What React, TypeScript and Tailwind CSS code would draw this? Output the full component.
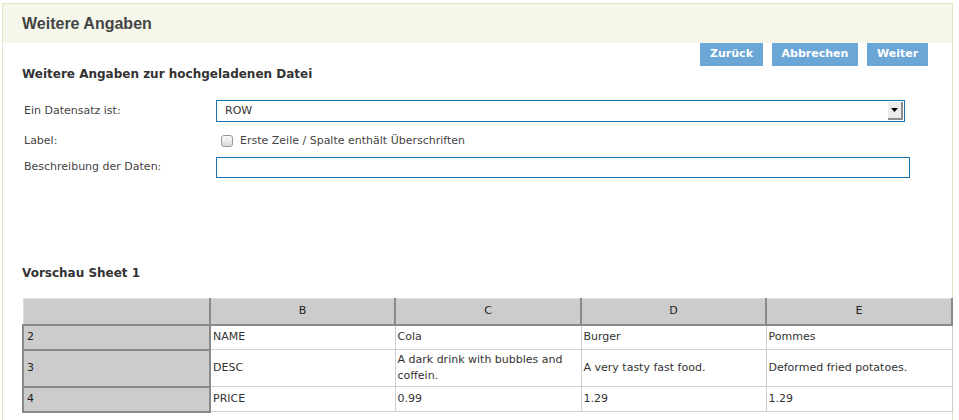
import React from "react";

const font = { fontFamily: '"DejaVu Sans", Verdana, sans-serif' };

function Btn({ label, w }: { label: string; w: string }) {
  return (
    <button
      className={`h-[23px] ${w} bg-[#6aa6d6] text-white text-[11px] font-bold flex items-center justify-center`}
      style={font}
    >
      {label}
    </button>
  );
}

const rows = [
  { n: "2", b: "NAME", c: "Cola", d: "Burger", e: "Pommes", h: "h-[25px]" },
  {
    n: "3",
    b: "DESC",
    c: "A dark drink with bubbles and coffein.",
    d: "A very tasty fast food.",
    e: "Deformed fried potatoes.",
    h: "h-[37px]",
  },
  { n: "4", b: "PRICE", c: "0.99", d: "1.29", e: "1.29", h: "h-[25px]" },
];

export default function App() {
  return (
    <div className="w-[959px] h-[420px] overflow-hidden bg-white pl-[2px] pt-[3px]" style={font}>
      <div className="w-[951px] h-[440px] border border-[#dfe6c2] bg-white">
        <div className="h-[39px] bg-[#f5f7eb] flex items-center pl-[19px]">
          <span
            className="text-[16px] font-bold text-[#444]"
            style={{ fontFamily: '"Liberation Sans", Arial, sans-serif' }}
          >
            Weitere Angaben
          </span>
        </div>
        <div className="flex justify-end gap-[9px] pr-[24px]">
          <Btn label="Zurück" w="w-[63px]" />
          <Btn label="Abbrechen" w="w-[86px]" />
          <Btn label="Weiter" w="w-[61px]" />
        </div>
        <div className="pl-[19px] h-[15px] flex items-center">
          <span className="text-[12px] font-bold text-[#333] leading-none">
            Weitere Angaben zur hochgeladenen Datei
          </span>
        </div>
        <div className="pl-[21px] text-[11px] text-[#444]">
          <div className="flex items-center mt-[19px] h-[22px]">
            <div className="w-[192px]">Ein Datensatz ist:</div>
            <div className="w-[689px] h-[22px] border border-[#1b74b4] flex items-center pl-[8px] relative">
              <span className="text-[#333]">ROW</span>
              <div className="absolute right-[1px] top-[1px] w-[15px] h-[18px] bg-[#ececec] border-r-2 border-b-2 border-[#8c8c8c] flex items-center justify-center">
                <svg width="7" height="4" viewBox="0 0 7 4">
                  <path d="M0 0h7L3.5 4z" fill="#000" />
                </svg>
              </div>
            </div>
          </div>
          <div className="flex items-center mt-[12px] h-[14px]">
            <div className="w-[197px]">Label:</div>
            <div className="w-[12px] h-[12px] rounded-[3px] border border-[#9a9a9a] bg-gradient-to-b from-[#fafafa] to-[#dcdcdc]" />
            <div className="ml-[7px]">Erste Zeile / Spalte enthält Überschriften</div>
          </div>
          <div className="flex items-center mt-[9px] h-[21px]">
            <div className="w-[192px]">Beschreibung der Daten:</div>
            <div className="w-[694px] h-[21px] border border-[#1b74b4]" />
          </div>
        </div>
        <div className="pl-[19px] mt-[87px] h-[15px] flex items-center">
          <span className="text-[12px] font-bold text-[#333] leading-none">Vorschau Sheet 1</span>
        </div>
        <div className="pl-[19px] mt-[18px]">
          <table className="border-collapse text-[11px] text-[#333] w-[929px] table-fixed">
            <colgroup>
              <col className="w-[187px]" />
              <col className="w-[185px]" />
              <col className="w-[186px]" />
              <col className="w-[185px]" />
              <col className="w-[186px]" />
            </colgroup>
            <thead>
              <tr className="h-[26px]">
                <th className="bg-[#cccccc] border-t border-l border-t-[#dedede] border-l-[#dedede] border-r-2 border-r-[#8a8a8a] border-b-2 border-b-[#8a8a8a] font-normal" />
                {["B", "C", "D", "E"].map((c) => (
                  <th
                    key={c}
                    className="bg-[#cccccc] border-t border-t-[#dedede] border-r-2 border-r-[#8a8a8a] border-b-2 border-b-[#8a8a8a] font-normal text-center text-[#222]"
                  >
                    {c}
                  </th>
                ))}
              </tr>
            </thead>
            <tbody>
              {rows.map((r) => (
                <tr key={r.n} className={r.h}>
                  <td className="bg-[#cccccc] border-l-2 border-l-[#8a8a8a] border-r-2 border-r-[#8a8a8a] border-b-2 border-b-[#8a8a8a] px-[3px] text-[#222]">
                    {r.n}
                  </td>
                  {[r.b, r.c, r.d, r.e].map((v, i) => (
                    <td
                      key={i}
                      className="border border-[#cfcfcf] px-[2px] leading-[16px] align-middle"
                    >
                      {v}
                    </td>
                  ))}
                </tr>
              ))}
            </tbody>
          </table>
        </div>
      </div>
    </div>
  );
}
